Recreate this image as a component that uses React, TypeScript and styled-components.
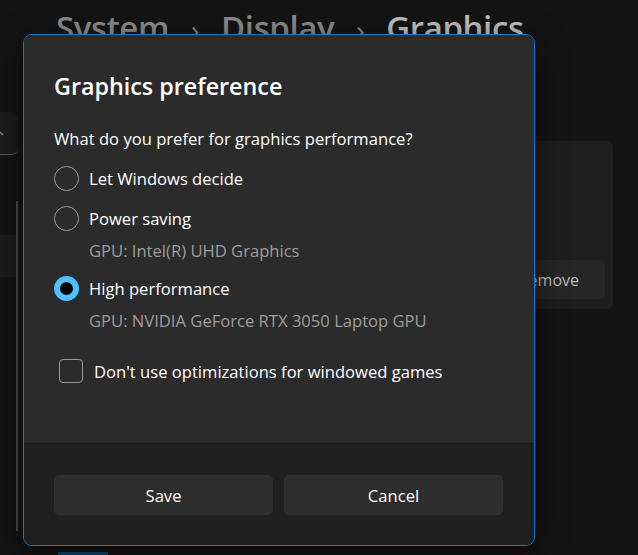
import React from 'react';
import styled, { createGlobalStyle } from 'styled-components';

const GlobalStyle = createGlobalStyle`
    html, body {
        margin: 0;
        padding: 0;
        background: #141414;
        overflow: hidden;
    }
    body {
        font-family: "Segoe UI", "Open Sans", sans-serif;
        color: #ffffff;
    }
`

const Page = styled.div`
    position: relative;
    width: 638px;
    height: 555px;
    overflow: hidden;
    background: #141414;
`

const Breadcrumb = styled.div`
    display: flex;
    align-items: baseline;
    gap: 22px;
    padding: 0 0 0 56px;
    margin-top: 8px;
    font-size: 33px;
    font-weight: 600;
    letter-spacing: -0.4px;
    line-height: 40px;
    color: #8a8a8a;
    white-space: nowrap;
    span.sep {
        font-weight: 400;
        font-size: 28px;
    }
    span.current {
        color: #bdbdbd;
    }
`

const Backdrop = styled.div`
    display: flex;
    justify-content: space-between;
    margin-top: 63px;
`

const NavColumn = styled.div`
    width: 18px;
    display: flex;
    flex-direction: column;
`

const NavCard = styled.div`
    height: 42px;
    margin-left: -20px;
    background: #1c1c1c;
    border-radius: 0 6px 6px 0;
    border-bottom: 1px solid #555;
    display: flex;
    align-items: center;
    justify-content: flex-end;
    padding-right: 14px;
`

const NavList = styled.div`
    position: relative;
    margin-top: 46px;
    height: 330px;
    border-right: 2px solid #4a4a4a;
`

const NavRow = styled.div`
    margin-top: 34px;
    height: 42px;
    background: #1b1b1b;
`

const SettingCard = styled.div`
    width: 290px;
    height: 168px;
    margin-top: 29px;
    margin-right: 25px;
    background: #1e1e1e;
    border-radius: 6px;
    display: flex;
    align-items: flex-end;
    justify-content: flex-end;
    padding: 0 8px 10px 0;
    box-sizing: border-box;
`

const RemoveButton = styled.div`
    width: 120px;
    height: 39px;
    border-radius: 5px;
    background: #262626;
    color: #bcbcbc;
    font-size: 16px;
    display: flex;
    align-items: center;
    justify-content: flex-end;
    padding-right: 26px;
    box-sizing: border-box;
`

const AccentMark = styled.div`
    position: absolute;
    left: 58px;
    bottom: 0;
    width: 50px;
    height: 3px;
    background: #0b4a78;
`

const Dialog = styled.div`
    position: absolute;
    left: 23px;
    top: 34px;
    width: 512px;
    height: 512px;
    box-sizing: border-box;
    border: 1px solid #1479d2;
    border-radius: 9px;
    overflow: hidden;
    display: flex;
    flex-direction: column;
    box-shadow: 0 8px 30px rgba(0, 0, 0, 0.55);
`

const DialogBody = styled.div`
    flex: 1;
    background: #2b2b2b;
    padding: 35px 30px 0 30px;
    font-size: 16.6px;
`

const Title = styled.h1`
    margin: 0;
    font-size: 23.3px;
    font-weight: 600;
    line-height: 32px;
    color: #ffffff;
`

const Question = styled.p`
    margin: 26px 0 8px 0;
    line-height: 22px;
    color: #ffffff;
`

const Option = styled.label`
    display: flex;
    align-items: center;
    gap: 10px;
    height: 40px;
    color: #ffffff;
`

const Radio = styled.span<{ $checked?: boolean }>`
    width: 25px;
    height: 25px;
    box-sizing: border-box;
    border-radius: 50%;
    flex-shrink: 0;
    border: ${(p) => (p.$checked ? '6px solid #4cc2ff' : '1.5px solid #9a9a9a')};
    background: ${(p) => (p.$checked ? '#000000' : 'transparent')};
`

const Hint = styled.div`
    padding-left: 35px;
    margin-bottom: 4px;
    height: 26px;
    line-height: 26px;
    color: #9d9d9d;
`

const CheckRow = styled.label`
    display: flex;
    align-items: center;
    gap: 11px;
    margin-top: 25px;
    padding-left: 5px;
    color: #ffffff;
`

const CheckBox = styled.span`
    width: 24px;
    height: 24px;
    box-sizing: border-box;
    border: 1.5px solid #9a9a9a;
    border-radius: 4px;
    flex-shrink: 0;
`

const DialogFooter = styled.div`
    height: 102px;
    background: #202020;
    border-top: 1px solid #1c1c1c;
    box-sizing: border-box;
    padding: 31px 31px 0 30px;
    display: grid;
    grid-template-columns: 1fr 1fr;
    gap: 11px;
    align-items: start;
`

const FooterButton = styled.button`
    height: 40px;
    border: 1px solid #303030;
    border-radius: 5px;
    background: #2d2d2d;
    color: #ffffff;
    font-family: inherit;
    font-size: 16.6px;
`

const App = () => {
    return (
        <Page>
            <GlobalStyle />
            <Breadcrumb>
                <span>System</span>
                <span className="sep">›</span>
                <span>Display</span>
                <span className="sep">›</span>
                <span className="current">Graphics</span>
            </Breadcrumb>
            <Backdrop>
                <NavColumn>
                    <NavCard>
                        <svg width="10" height="6" viewBox="0 0 10 6">
                            <path d="M1 5 L5 1 L9 5" stroke="#9a9a9a" strokeWidth="1.2" fill="none" />
                        </svg>
                    </NavCard>
                    <NavList>
                        <NavRow />
                    </NavList>
                </NavColumn>
                <SettingCard>
                    <RemoveButton>Remove</RemoveButton>
                </SettingCard>
            </Backdrop>
            <AccentMark />

            <Dialog>
                <DialogBody>
                    <Title>Graphics preference</Title>
                    <Question>What do you prefer for graphics performance?</Question>
                    <Option>
                        <Radio />
                        Let Windows decide
                    </Option>
                    <Option>
                        <Radio />
                        Power saving
                    </Option>
                    <Hint>GPU: Intel(R) UHD Graphics</Hint>
                    <Option>
                        <Radio $checked />
                        High performance
                    </Option>
                    <Hint>GPU: NVIDIA GeForce RTX 3050 Laptop GPU</Hint>
                    <CheckRow>
                        <CheckBox />
                        Don't use optimizations for windowed games
                    </CheckRow>
                </DialogBody>
                <DialogFooter>
                    <FooterButton>Save</FooterButton>
                    <FooterButton>Cancel</FooterButton>
                </DialogFooter>
            </Dialog>
        </Page>
    )
}

export default App
